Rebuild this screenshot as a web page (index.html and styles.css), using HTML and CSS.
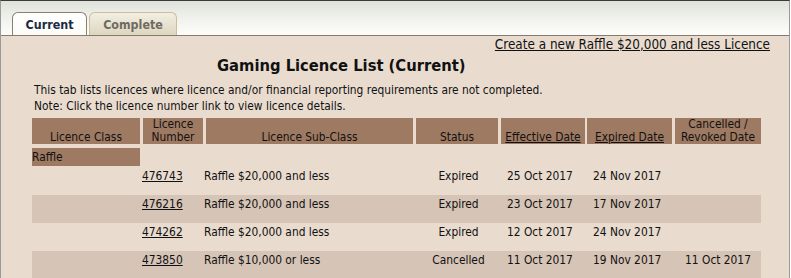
FILE: index.html
```html
<!DOCTYPE html>
<html>
<head>
<meta charset="utf-8">
<link rel="stylesheet" href="styles.css">
</head>
<body>
<div class="frame">
  <div class="tabbar">
    <div class="tab tab-active">Current</div>
    <div class="tab tab-idle">Complete</div>
  </div>
  <div class="content">
    <div class="toplink"><a href="#">Create a new Raffle $20,000 and less Licence</a></div>
    <h1 class="title">Gaming Licence List (Current)</h1>
    <p class="note">This tab lists licences where licence and/or financial reporting requirements are not completed.</p>
    <p class="note">Note: Click the licence number link to view licence details.</p>
    <table class="list">
      <colgroup>
        <col class="c1"><col class="c2"><col class="c3"><col class="c4"><col class="c5"><col class="c6"><col class="c7">
      </colgroup>
      <thead>
        <tr>
          <th>Licence Class</th>
          <th>Licence<br>Number</th>
          <th>Licence Sub-Class</th>
          <th>Status</th>
          <th><a href="#">Effective Date</a></th>
          <th><a href="#">Expired Date</a></th>
          <th>Cancelled /<br>Revoked Date</th>
        </tr>
      </thead>
      <tbody>
        <tr class="group"><td class="grp">Raffle</td><td colspan="6"></td></tr>
        <tr class="row">
          <td></td><td><a href="#">476743</a></td><td>Raffle $20,000 and less</td><td class="ctr">Expired</td><td>25 Oct 2017</td><td>24 Nov 2017</td><td></td>
        </tr>
        <tr class="row alt">
          <td></td><td><a href="#">476216</a></td><td>Raffle $20,000 and less</td><td class="ctr">Expired</td><td>23 Oct 2017</td><td>17 Nov 2017</td><td></td>
        </tr>
        <tr class="row">
          <td></td><td><a href="#">474262</a></td><td>Raffle $20,000 and less</td><td class="ctr">Expired</td><td>12 Oct 2017</td><td>24 Nov 2017</td><td></td>
        </tr>
        <tr class="row alt">
          <td></td><td><a href="#">473850</a></td><td>Raffle $10,000 or less</td><td class="ctr">Cancelled</td><td>11 Oct 2017</td><td>19 Nov 2017</td><td class="ctr">11 Oct 2017</td>
        </tr>
      </tbody>
    </table>
  </div>
</div>
</body>
</html>
```
FILE: styles.css
```css
html, body {
  margin: 0;
  padding: 0;
  background: #ffffff;
}
body {
  font-family: "DejaVu Sans Condensed", "DejaVu Sans", sans-serif;
  font-size: 11.85px;
  color: #111111;
}
.frame {
  width: 788px;
  height: 277px;
  border-top: 1px solid #3c3a36;
  border-left: 1px solid #9a9a9a;
  border-right: 1px solid #9a9a9a;
  overflow: hidden;
  background: #e9dccf;
}
.tabbar {
  height: 34px;
  border-bottom: 1px solid #857a6c;
  background: linear-gradient(#dfe2da, #f3f4ef 60%, #fdfdfb);
  display: flex;
  align-items: flex-end;
  padding-left: 11px;
  gap: 2px;
}
.tab {
  box-sizing: border-box;
  border: 1px solid #a39a88;
  border-bottom: none;
  border-radius: 6px 6px 0 0;
  font-weight: bold;
  font-size: 12.4px;
  display: flex;
  align-items: center;
  justify-content: center;
  padding-top: 1px;
}
.tab-active {
  width: 75px;
  height: 23px;
  background: linear-gradient(#ffffff, #fbfbf8);
  color: #1c2a44;
  border-color: #8b8070;
}
.tab-idle {
  width: 88px;
  height: 23px;
  background: linear-gradient(#f2efe2, #ddd6c0);
  color: #6e6a62;
  border-color: #c9bf9f;
}
.content {
  padding: 0 0 0 31px;
}
.toplink {
  display: flex;
  justify-content: flex-end;
  padding-right: 19px;
  padding-top: 1px;
  height: 16px;
  font-size: 13.4px;
}
a {
  color: #111111;
  text-decoration: underline;
}
.title {
  margin: 1px 0 0 0;
  padding-left: 185px;
  font-size: 16.4px;
  font-weight: bold;
  height: 23px;
  line-height: 23px;
}
.note {
  margin: 0;
  padding-left: 2px;
  line-height: 16px;
  height: 16px;
}
.title + .note {
  margin-top: 5px;
}
.list {
  margin-top: 4px;
  border-collapse: separate;
  border-spacing: 0;
  width: 729px;
  table-layout: fixed;
}
.c1 { width: 111px; }
.c2 { width: 63px; }
.c3 { width: 210px; }
.c4 { width: 85px; }
.c5 { width: 86px; }
.c6 { width: 88px; }
.c7 { width: 86px; }
.list th {
  background: #9e7a62;
  background-clip: padding-box;
  border-right: 3px solid transparent;
  font-weight: normal;
  vertical-align: bottom;
  text-align: center;
  height: 26px;
  padding: 0;
  line-height: 13px;
  box-sizing: border-box;
}
.list th:nth-child(5) { border-right-width: 2px; }
.list th:last-child {
  border-right: none;
}
.group td {
  padding: 4px 0 1px 0;
  vertical-align: top;
  line-height: 18px;
}
.grp {
  background: #9e7a62;
  background-clip: content-box;
  padding-right: 3px !important;
}
.row td {
  height: 28px;
  box-sizing: border-box;
  padding: 2px 0 0 0;
  vertical-align: top;
  line-height: 14px;
}
.row td:nth-child(2) { text-indent: -1px; }
.row td:nth-child(3) { text-indent: -2px; }
.alt td {
  background: #d6c4b6;
}
.ctr {
  text-align: center;
}
.row td:nth-child(5) { padding-left: 6px; }
.row td:nth-child(6) { padding-left: 6px; }
```
